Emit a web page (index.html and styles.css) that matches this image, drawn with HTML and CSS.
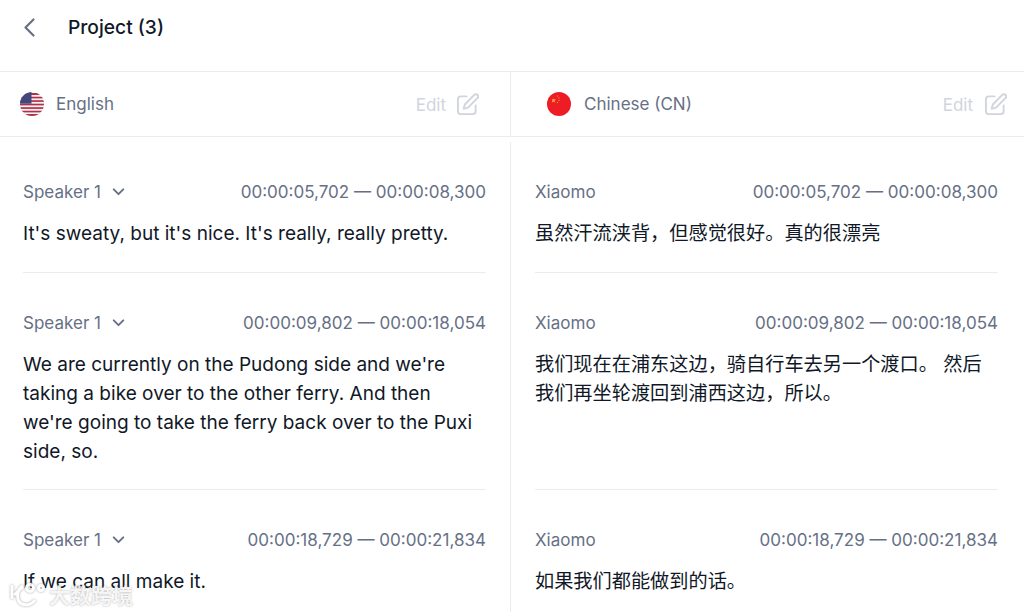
FILE: index.html
```html
<!DOCTYPE html>
<html lang="en">
<head>
<meta charset="utf-8">
<title>Project (3)</title>
<link rel="stylesheet" href="styles.css">
</head>
<body>
<div class="page">
  <header class="topbar">
    <svg class="back" width="24" height="24" viewBox="0 0 24 24" fill="none" stroke="#667085" stroke-width="2.200" stroke-linecap="round" stroke-linejoin="round"><path d="M15.500 4.500 7.500 12.500l8 8"/></svg>
    <h1 class="title">Project (3)</h1>
  </header>
  <div class="langs">
    <div class="lang lang-left">
      <div class="lang-name">
        <svg class="flag" width="24" height="24" viewBox="0 0 24 24">
          <defs><clipPath id="c1"><circle cx="12" cy="12" r="12"/></clipPath></defs>
          <g clip-path="url(#c1)">
            <rect width="24" height="24" fill="#f6f2f3"/>
            <rect y="1" width="24" height="2" fill="#b0324a"/>
            <rect y="4.700" width="24" height="1.700" fill="#b0324a"/>
            <rect y="8.200" width="24" height="1.700" fill="#b0324a"/>
            <rect y="11.700" width="24" height="1.700" fill="#b0324a"/>
            <rect y="15.200" width="24" height="1.700" fill="#b0324a"/>
            <rect y="18.700" width="24" height="1.700" fill="#b0324a"/>
            <rect y="22" width="24" height="2" fill="#b0324a"/>
            <rect width="11.500" height="11.700" fill="#41487c"/>
          </g>
        </svg>
        <span>English</span>
      </div>
      <div class="edit"><span class="edit-label">Edit</span>
        <svg width="23" height="23" viewBox="0 0 24 24" fill="none" stroke="#d0d5dd" stroke-width="2" stroke-linecap="round" stroke-linejoin="round"><path d="M11 3.500H5a3 3 0 0 0-3 3V19a3 3 0 0 0 3 3h12.500a3 3 0 0 0 3-3v-6"/><path d="M19 2a2.400 2.400 0 0 1 3.400 3.400L12.500 15.300 8 16.500l1.200-4.500Z"/></svg>
      </div>
    </div>
    <div class="lang lang-right">
      <div class="lang-name">
        <svg class="flag" width="24" height="24" viewBox="0 0 24 24">
          <circle cx="12" cy="12" r="12" fill="#ee1c25"/>
          <path d="M6.500 5.500l.7 1.900 2-.1-1.600 1.300.6 1.900-1.700-1.100-1.700 1.100.6-1.900L4.800 7.300l2 .1Z" fill="#f6b73c"/>
          <circle cx="10.500" cy="4" r=".6" fill="#f6b73c"/><circle cx="12" cy="6" r=".6" fill="#f6b73c"/><circle cx="12" cy="8.500" r=".6" fill="#f6b73c"/><circle cx="10.500" cy="10.500" r=".6" fill="#f6b73c"/>
        </svg>
        <span>Chinese (CN)</span>
      </div>
      <div class="edit"><span class="edit-label">Edit</span>
        <svg width="23" height="23" viewBox="0 0 24 24" fill="none" stroke="#d0d5dd" stroke-width="2" stroke-linecap="round" stroke-linejoin="round"><path d="M11 3.500H5a3 3 0 0 0-3 3V19a3 3 0 0 0 3 3h12.500a3 3 0 0 0 3-3v-6"/><path d="M19 2a2.400 2.400 0 0 1 3.400 3.400L12.500 15.300 8 16.500l1.200-4.500Z"/></svg>
      </div>
    </div>
  </div>
  <main class="rows">
    <section class="cell cell-left">
      <div class="meta"><div class="speaker">Speaker 1 <svg width="17" height="17" viewBox="0 0 16 16" fill="none" stroke="#667085" stroke-width="1.800" stroke-linecap="round" stroke-linejoin="round"><path d="M3.500 6 8 10.500 12.500 6"/></svg></div><div class="time">00:00:05,702 — 00:00:08,300</div></div>
      <p class="text">It's sweaty, but it's nice. It's really, really pretty.</p>
    </section>
    <section class="cell cell-right">
      <div class="meta"><div class="speaker">Xiaomo</div><div class="time">00:00:05,702 — 00:00:08,300</div></div>
      <p class="text">虽然汗流浃背，但感觉很好。真的很漂亮</p>
    </section>
    <section class="cell cell-left">
      <div class="meta"><div class="speaker">Speaker 1 <svg width="17" height="17" viewBox="0 0 16 16" fill="none" stroke="#667085" stroke-width="1.800" stroke-linecap="round" stroke-linejoin="round"><path d="M3.500 6 8 10.500 12.500 6"/></svg></div><div class="time">00:00:09,802 — 00:00:18,054</div></div>
      <p class="text">We are currently on the Pudong side and we're taking a bike over to the other ferry. And then we're going to take the ferry back over to the Puxi side, so.</p>
    </section>
    <section class="cell cell-right">
      <div class="meta"><div class="speaker">Xiaomo</div><div class="time">00:00:09,802 — 00:00:18,054</div></div>
      <p class="text">我们现在在浦东这边，骑自行车去另一个渡口。 然后我们再坐轮渡回到浦西这边，所以。</p>
    </section>
    <section class="cell cell-left">
      <div class="meta"><div class="speaker">Speaker 1 <svg width="17" height="17" viewBox="0 0 16 16" fill="none" stroke="#667085" stroke-width="1.800" stroke-linecap="round" stroke-linejoin="round"><path d="M3.500 6 8 10.500 12.500 6"/></svg></div><div class="time">00:00:18,729 — 00:00:21,834</div></div>
      <p class="text">If we can all make it.</p>
    </section>
    <section class="cell cell-right">
      <div class="meta"><div class="speaker">Xiaomo</div><div class="time">00:00:18,729 — 00:00:21,834</div></div>
      <p class="text">如果我们都能做到的话。</p>
    </section>
  </main>
  <div class="watermark">
    <svg class="wm-logo" width="40" height="24" viewBox="0 0 40 24" fill="none" stroke="#fff" stroke-width="3"><path d="M4 2v14"/><path d="M15 3C8 6 8 18 14 21c5 2 10 0 13-4"/><path d="M6 12l9-8"/><circle cx="22" cy="5" r="3.500"/><circle cx="33" cy="5" r="2.500"/></svg>
    <span>大数跨境</span>
  </div>
</div>
</body>
</html>
```
FILE: styles.css
```css
* { box-sizing: border-box; }
html, body { margin: 0; padding: 0; background: #fff; }
.page {
  width: 1024px;
  height: 612px;
  overflow: hidden;
  position: relative;
  font-family: Inter, "Noto Sans CJK SC", sans-serif;
}
.topbar {
  height: 72px;
  display: flex;
  align-items: center;
  padding: 0 0 17px 18px;
  gap: 26px;
  border-bottom: 1px solid #eaecf0;
}
.title {
  margin: 0;
  font-size: 19.2px;
  font-weight: 500;
  line-height: 28px;
  color: #101828;
}
.langs {
  display: grid;
  grid-template-columns: 511px 513px;
  height: 65px;
  border-bottom: 1px solid #eaecf0;
}
.lang {
  display: flex;
  align-items: center;
  justify-content: space-between;
}
.lang-left {
  padding: 0 31px 0 20px;
  border-right: 1px solid #eaecf0;
}
.lang-right { padding: 0 17px 0 36px; }
.lang-right .lang-name { gap: 13px; }
.lang-right .edit { gap: 11px; }
.lang-name {
  display: flex;
  align-items: center;
  gap: 12px;
  font-size: 17px;
  line-height: 24px;
  color: #667085;
}
.flag { display: block; }
.edit {
  display: flex;
  align-items: center;
  gap: 10px;
  font-size: 17px;
  color: #d0d5dd;
}
.edit-label { padding-top: 2px; }
.rows {
  margin-top: 5px;
  display: grid;
  grid-template-columns: 511px 513px;
  grid-auto-rows: min-content;
}
.cell {
  display: flex;
  flex-direction: column;
  padding: 38px 24px 0 23px;
}
.cell-left { border-right: 1px solid #eaecf0; }
.cell-right { padding: 38px 26px 0 24px; }
.meta {
  display: flex;
  justify-content: space-between;
  align-items: center;
  height: 23px;
  margin-bottom: 1px;
  font-size: 17.05px;
  color: #667085;
}
.speaker { display: flex; align-items: center; gap: 9px; }
.text {
  flex: 1;
  margin: 15px 0 0;
  padding: .2px 8px 23px 0;
  font-size: 19.05px;
  line-height: 29px;
  color: #101828;
  border-bottom: 1px solid #eaecf0;
}
.cell-right .text {
  font-size: 19.2px;
  line-height: 28.8px;
  padding: 0 0 24px;
}
.watermark {
  position: absolute;
  left: 8px;
  top: 583px;
  display: flex;
  align-items: flex-start;
  gap: 1px;
  color: rgba(255,255,255,.88);
  font-size: 21px;
  line-height: 26px;
  font-weight: 700;
  text-shadow: 0 0 2px rgba(110,110,110,.6);
}
.wm-logo { filter: drop-shadow(0 0 1px rgba(110,110,110,.7)); opacity: .9; }
```
